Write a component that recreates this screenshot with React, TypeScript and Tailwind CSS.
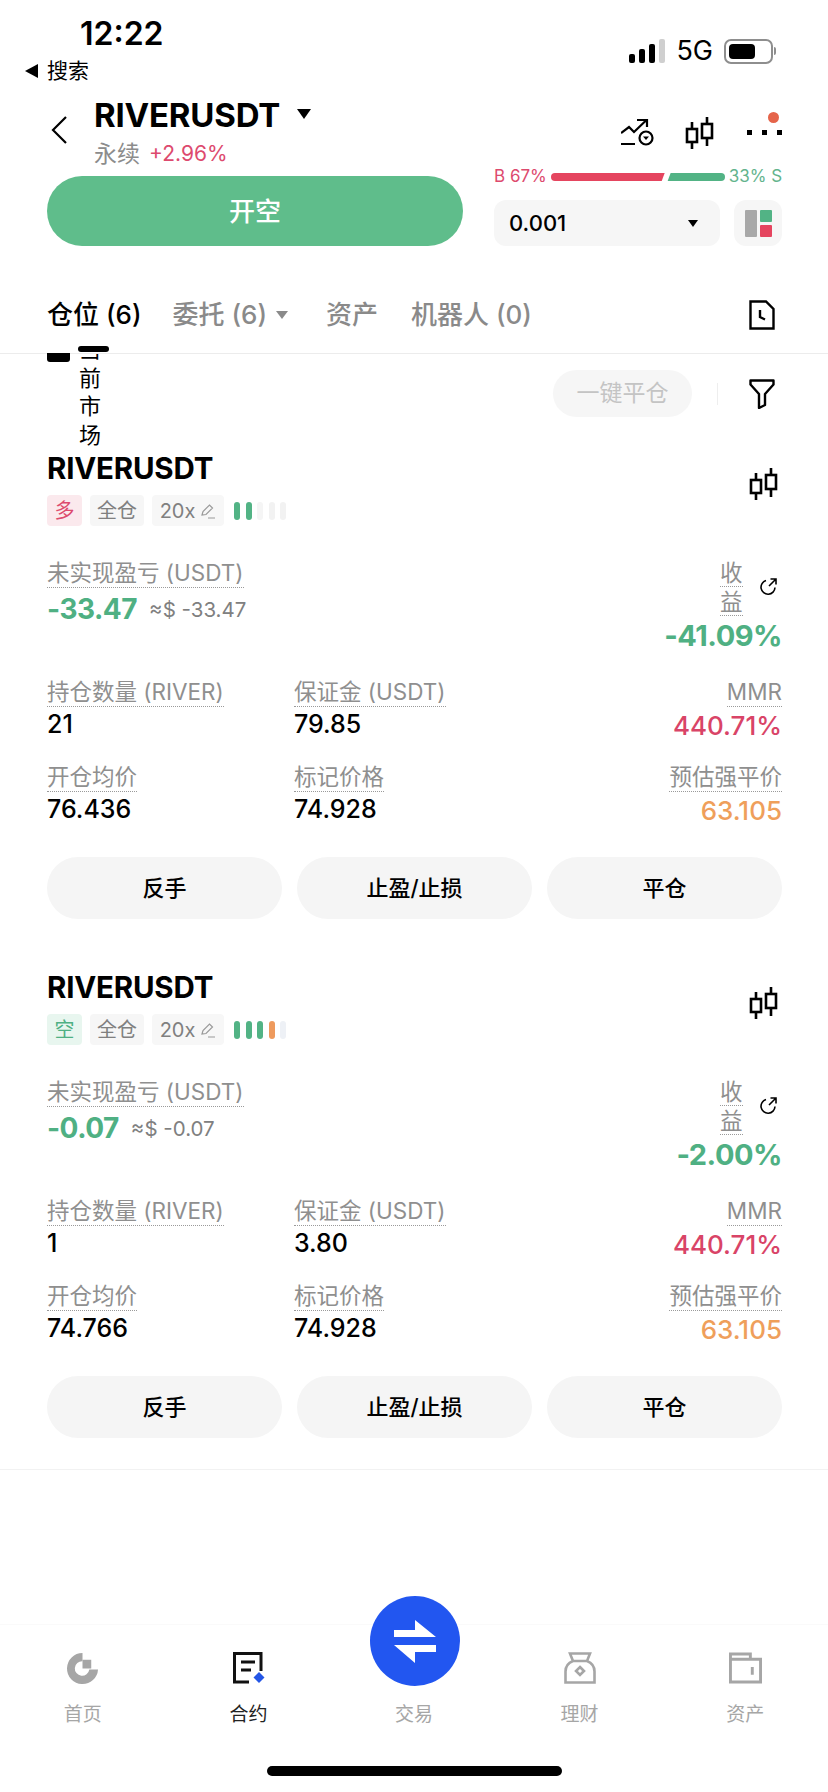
const FONT = "font-['Inter','Noto_Sans_CJK_SC',sans-serif]";

function Candles({ className }: { className?: string }) {
  return (
    <svg viewBox="0 0 30 33" className={className} fill="none" stroke="#000" strokeWidth="2.6">
      <path d="M7 5v27M22 0v29" />
      <rect x="2" y="12" width="10" height="13" fill="#fff" />
      <rect x="17" y="7" width="10" height="14" fill="#fff" />
    </svg>
  );
}

function Label({ children }: { children: React.ReactNode }) {
  return (
    <span className="border-b border-dotted border-[#9a9a9a] text-[22.5px] leading-[28px] text-[#8f8f8f]">{children}</span>
  );
}

function Cell({ label, value, color, right }: { label: string; value: string; color?: string; right?: boolean }) {
  return (
    <div className={right ? "flex flex-col items-end" : "flex flex-col items-start"}>
      <div className="h-[30px] flex items-center">
        <Label>{label}</Label>
      </div>
      <div className={`mt-[3px] h-[30px] flex items-center font-medium ${color ?? "text-black text-[25px]"}`}>{value}</div>
    </div>
  );
}

function Position(props: {
  side: string;
  sideClass: string;
  bars: string[];
  pnl: string;
  pnlUsd: string;
  roe: string;
  qty: string;
  margin: string;
  entry: string;
}) {
  return (
    <div className="pl-[47px] pr-[46px] flex flex-col">
      <div className="h-[41px] flex items-center justify-between">
        <span className="text-[29.5px] font-bold text-black tracking-[-0.2px]">RIVERUSDT</span>
        <Candles className="w-[30px] h-[33px] mr-[3px] mt-[32px]" />
      </div>
      <div className="mt-[6px] h-[31px] flex items-center gap-[8px]">
        <span className={`w-[35px] h-[31px] rounded-[4px] flex items-center justify-center text-[20px] ${props.sideClass}`}>{props.side}</span>
        <span className="w-[54px] h-[31px] rounded-[4px] bg-[#f6f6f6] flex items-center justify-center text-[20px] text-[#808080]">全仓</span>
        <span className="w-[72px] h-[31px] rounded-[4px] bg-[#f7f7f7] flex items-center justify-center gap-[5px] text-[20px] text-[#808080]">
          20x
          <svg viewBox="0 0 16 16" className="w-[16px] h-[16px]" fill="none" stroke="#9a9a9a" strokeWidth="1.2">
            <path d="M2 12 3 8.500 9.500 2l3 3L6 11.500zM8 15h7" />
          </svg>
        </span>
        <div className="flex gap-[5.5px] ml-[2px]">
          {props.bars.map((c, i) => (
            <span key={i} className={`w-[6px] h-[18px] rounded-full ${c}`} />
          ))}
        </div>
      </div>
      <div className="mt-[32px] h-[119px] flex justify-between">
        <div className="flex flex-col items-start">
          <div className="h-[30px] flex items-center">
            <Label>未实现盈亏 (USDT)</Label>
          </div>
          <div className="mt-[2px] h-[38px] flex items-center gap-[12px]">
            <span className="text-[28px] font-bold tracking-[-0.5px] text-[#4fb083]">{props.pnl}</span>
            <span className="text-[20.5px] text-[#808080] mt-[3px]">{props.pnlUsd}</span>
          </div>
        </div>
        <div className="flex flex-col items-end">
          <div className="flex items-center gap-[17px] pr-[5px]">
            <div className="w-[22px] text-[22.5px] leading-[29px] text-[#8f8f8f]">
              <span className="border-b border-dotted border-[#9a9a9a]">收益</span>
            </div>
            <svg viewBox="0 0 18 18" className="w-[18px] h-[18px]" fill="none" stroke="#000" strokeWidth="1.6">
              <path d="M7 2.500a7 7 0 1 0 9 7M10 8l7-7M11.500 1H17v5.500" />
            </svg>
          </div>
          <span className="mt-[2px] text-[29px] leading-[36px] font-bold tracking-[-0.5px] text-[#4fb083]">{props.roe}</span>
        </div>
      </div>
      <div className="grid grid-cols-[247px_1fr_auto] gap-y-[22px]">
        <Cell label="持仓数量 (RIVER)" value={props.qty} />
        <Cell label="保证金 (USDT)" value={props.margin} />
        <Cell label="MMR" value="440.71%" color="text-[26px] text-[#d94467]" right />
        <Cell label="开仓均价" value={props.entry} />
        <Cell label="标记价格" value="74.928" />
        <Cell label="预估强平价" value="63.105" color="text-[26px] text-[#ef9f5b]" right />
      </div>
      <div className="mt-[32px] flex gap-[15px]">
        {["反手", "止盈/止损", "平仓"].map((t) => (
          <div key={t} className="flex-1 h-[62px] rounded-full bg-[#f5f5f5] flex items-center justify-center text-[22px] font-medium text-black">{t}</div>
        ))}
      </div>
    </div>
  );
}

function NavItem({ label, active, children }: { label: string; active?: boolean; children?: React.ReactNode }) {
  return (
    <div className="flex-1 flex flex-col items-center">
      <div className="h-[34px] flex items-center justify-center">{children}</div>
      <span className={`mt-[17px] text-[19px] leading-[26px] ${active ? "text-[#222]" : "text-[#a6a6a6]"}`}>{label}</span>
    </div>
  );
}

export default function App() {
  return (
    <div className={`${FONT} relative w-[828px] h-[1792px] bg-white overflow-hidden flex flex-col`}>
      {/* status bar */}
      <div className="h-[96px] flex justify-between shrink-0">
        <div className="pl-[25px]">
          <div className="pl-[55px] pt-[14px] h-[56px] text-[32px] leading-[40px] font-semibold text-black">12:22</div>
          <div className="flex items-center gap-[8px] h-[30px] text-[21px] text-black">
            <svg viewBox="0 0 14 14" className="w-[14px] h-[14px]"><path d="M13 0v14L0 7z" fill="#000" /></svg>
            搜索
          </div>
        </div>
        <div className="pr-[52px] pt-[38px] h-[64px] flex items-center gap-[11px]">
          <div className="flex items-end gap-[4px] h-[24px]">
            <span className="w-[6px] h-[9px] rounded-[2px] bg-black" />
            <span className="w-[6px] h-[14px] rounded-[2px] bg-black" />
            <span className="w-[6px] h-[19px] rounded-[2px] bg-black" />
            <span className="w-[6px] h-[24px] rounded-[2px] bg-[#cfcfcf]" />
          </div>
          <span className="text-[27px] text-black">5G</span>
          <div className="flex items-center gap-[1px]">
            <div className="w-[49px] h-[25px] rounded-[7px] border-2 border-[#8e8e8e] p-[3px]">
              <div className="w-[26px] h-full rounded-[4px] bg-black" />
            </div>
            <span className="w-[2px] h-[8px] rounded-r bg-[#8e8e8e]" />
          </div>
        </div>
      </div>

      {/* title */}
      <div className="h-[80px] shrink-0 pl-[50px] pr-[46px] flex justify-between">
        <div className="flex">
          <svg viewBox="0 0 18 30" className="w-[18px] h-[30px] mt-[19px]" fill="none" stroke="#000" strokeWidth="2.2">
            <path d="M16 2 3 15l13 13" />
          </svg>
          <div className="ml-[26px]">
            <div className="flex items-center h-[40px]">
              <span className="text-[33px] font-bold text-black tracking-[-0.2px]">RIVERUSDT</span>
              <svg viewBox="0 0 14 10" className="w-[14px] h-[10px] ml-[17px] mb-[5px]"><path d="M0 0h14L7 10z" fill="#000" /></svg>
            </div>
            <div className="flex items-center gap-[9px] h-[34px] mt-[1px]">
              <span className="text-[23px] text-[#8c8c8c]">永续</span>
              <span className="text-[21px] text-[#dd4a6e]">+2.96%</span>
            </div>
          </div>
        </div>
        <div className="relative flex items-start pt-[21px]">
          <svg viewBox="0 0 33 27" className="w-[33px] h-[27px] mt-[2px]" fill="none" stroke="#000" strokeWidth="2.2">
            <path d="M0 25h14M0 14l8-6 5 5L25 1.500M16 1h10v7" />
            <circle cx="25" cy="19" r="6.500" fill="#fff" />
            <path d="M22 17.500h6l-3 3.500z" fill="#000" stroke="none" />
          </svg>
          <Candles className="w-[30px] h-[33px] ml-[31px]" />
          <div className="ml-[32px] mt-[13px] flex gap-[10px]">
            <span className="w-[5px] h-[5px] bg-black" />
            <span className="w-[5px] h-[5px] bg-black" />
            <span className="w-[5px] h-[5px] bg-black" />
          </div>
          <span className="absolute right-[3px] top-[16px] w-[11px] h-[11px] rounded-full bg-[#e5644a]" />
        </div>
      </div>

      {/* order row */}
      <div className="h-[70px] shrink-0 pl-[47px] pr-[46px] flex justify-between">
        <div className="w-[416px] h-[70px] rounded-full bg-[#5fbd8b] flex items-center justify-center text-[26px] font-medium text-white">开空</div>
        <div className="w-[288px] flex flex-col">
          <div className="h-[24px] mt-[-11px] flex items-center text-[17px]">
            <span className="text-[#dd4a6e] whitespace-nowrap">B 67%</span>
            <svg viewBox="0 0 176 8" className="w-[174px] h-[8px] mx-[4px] shrink-0" preserveAspectRatio="none">
              <path d="M4 0H115L112 8H4a4 4 0 0 1 0-8z" fill="#e5455f" />
              <path d="M121 0H172a4 4 0 0 1 0 8H118z" fill="#52b385" />
            </svg>
            <span className="text-[#63b48d] whitespace-nowrap">33% S</span>
          </div>
          <div className="mt-[11px] flex justify-between">
            <div className="w-[226px] h-[46px] rounded-[12px] bg-[#f6f6f6] flex items-center justify-between pl-[15px] pr-[22px]">
              <span className="text-[22px] font-medium text-black">0.001</span>
              <svg viewBox="0 0 10 7" className="w-[10px] h-[7px]"><path d="M0 0h10L5 7z" fill="#000" /></svg>
            </div>
            <div className="w-[48px] h-[46px] rounded-[12px] bg-[#f6f6f6] flex items-center justify-center gap-[3px]">
              <span className="w-[12px] h-[27px] rounded-[1px] bg-[#a8a8a8]" />
              <div className="flex flex-col gap-[3px]">
                <span className="w-[12px] h-[12px] rounded-[1px] bg-[#52b385]" />
                <span className="w-[12px] h-[12px] rounded-[1px] bg-[#e5455f]" />
              </div>
            </div>
          </div>
        </div>
      </div>

      {/* tabs */}
      <div className="relative z-10 mt-[34px] h-[74px] shrink-0 bg-white border-b border-[#ececec] pl-[47px] pr-[53px] flex items-center justify-between pb-[3px]">
        <div className="flex items-center text-[26px] leading-[36px] font-medium text-[#8a8a8a]">
          <span className="text-black">仓位 (6)</span>
          <span className="ml-[31px]">委托 (6)</span>
          <svg viewBox="0 0 12 8" className="w-[12px] h-[8px] ml-[9px]"><path d="M0 0h12L6 8z" fill="#8a8a8a" /></svg>
          <span className="ml-[38px]">资产</span>
          <span className="ml-[33px]">机器人 (0)</span>
        </div>
        <svg viewBox="0 0 26 30" className="w-[26px] h-[30px]" fill="none" stroke="#000" strokeWidth="2.4">
          <path d="M1.500 1.500H17L24.500 9v19.500h-23z" />
          <path d="M11 10v7l5 2.500" />
        </svg>
      </div>

      {/* filter row */}
      <div className="relative h-[94px] shrink-0 pl-[75px] pr-[53px] flex justify-between">
        <div className="w-[30px] mt-[-19px] text-[22px] leading-[28.500px] text-black text-center">当前市场</div>
        <div className="flex items-center h-[78px] pt-[1px]">
          <div className="w-[139px] h-[47px] rounded-full bg-[#f6f6f6] flex items-center justify-center text-[23px] text-[#c4c4c4]">一键平仓</div>
          <span className="ml-[25px] w-[1px] h-[22px] bg-[#eeeeee]" />
          <svg viewBox="0 0 26 30" className="w-[26px] h-[30px] ml-[31px]" fill="none" stroke="#000" strokeWidth="2.4" strokeLinejoin="round">
            <path d="M1.500 1.500h23v4L16 15v11l-6 3V15L1.500 5.500z" />
          </svg>
        </div>
        {/* clipped sticky header remnants */}
        <span className="absolute z-20 left-[47px] top-[-1px] w-[23px] h-[9px] rounded-b-[3px] bg-black" />
        <span className="absolute z-20 left-[78px] top-[-8px] w-[31px] h-[6px] rounded-full bg-black" />
      </div>

      <div className="flex flex-col gap-[48px]">
        <Position
          side="多"
          sideClass="bg-[#fbe9ed] text-[#dd4a6e]"
          bars={["bg-[#52b385]", "bg-[#52b385]", "bg-[#f5f5f5]", "bg-[#f2f2f2]", "bg-[#f2f2f2]"]}
          pnl="-33.47"
          pnlUsd="≈$ -33.47"
          roe="-41.09%"
          qty="21"
          margin="79.85"
          entry="76.436"
        />
        <Position
          side="空"
          sideClass="bg-[#e8f6ef] text-[#4fb083]"
          bars={["bg-[#52b385]", "bg-[#52b385]", "bg-[#52b385]", "bg-[#ee9a5d]", "bg-[#eef1f6]"]}
          pnl="-0.07"
          pnlUsd="≈$ -0.07"
          roe="-2.00%"
          qty="1"
          margin="3.80"
          entry="74.766"
        />
      </div>
      <div className="mt-[31px] border-t border-[#f2f2f2]" />

      {/* bottom nav */}
      <div className="mt-auto relative shrink-0 h-[168px] border-t border-[#fafafa] pt-[26px]">
        <div className="flex">
          <NavItem label="首页">
            <svg viewBox="0 0 34 34" className="w-[33px] h-[33px]">
              <path d="M17 1A16 16 0 1 0 33 18H24A7.500 7.500 0 1 1 17 9.500z" fill="#a6a6a6" />
              <rect x="17" y="8" width="9" height="9" fill="#a6a6a6" />
            </svg>
          </NavItem>
          <NavItem label="合约" active>
            <svg viewBox="0 0 34 34" className="w-[34px] h-[34px]">
              <path d="M18 31H3.500V2.500H30V20M10 11h14M10 19h10" fill="none" stroke="#111" strokeWidth="3" />
              <path d="M28 21l5.500 5.500L28 32l-5.500-5.500z" fill="#2456e6" />
            </svg>
          </NavItem>
          <NavItem label="交易" />
          <NavItem label="理财">
            <svg viewBox="0 0 32 32" className="w-[32px] h-[32px]" fill="none" stroke="#a6a6a6" strokeWidth="2.6">
              <path d="M6 1.500h20L23 9c5 2 7.500 6 7.500 10.500V30.500h-29V19.500C1.500 15 4 11 9 9zM9 9h14" />
              <path d="M16 15l4 4-4 4-4-4z" />
            </svg>
          </NavItem>
          <NavItem label="资产">
            <svg viewBox="0 0 34 32" className="w-[33px] h-[32px]" fill="none" stroke="#a6a6a6" strokeWidth="3">
              <path d="M1.500 30.500V1.500H22V7H32.500V30.500zM1.500 7H22M24 15v8" />
            </svg>
          </NavItem>
        </div>
        <div className="absolute left-[370px] top-[-29px] w-[90px] h-[90px] rounded-full bg-[#2256f0] flex items-center justify-center">
          <svg viewBox="0 0 42 43" className="w-[42px] h-[43px]">
            <path d="M21 0 42 17H0v-7h21zM0 25h42v7H21v11L0 25z" fill="#fff" />
          </svg>
        </div>
        <div className="absolute left-[267px] bottom-[16px] w-[295px] h-[10px] rounded-full bg-black" />
      </div>
    </div>
  );
}
